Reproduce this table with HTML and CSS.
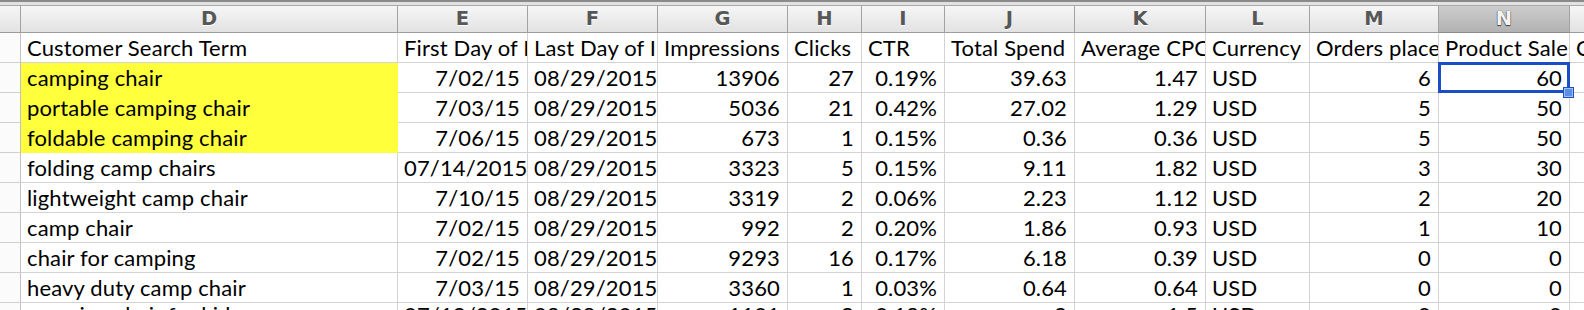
FILE: index.html
```html
<!DOCTYPE html>
<html>
<head>
<meta charset="utf-8">
<link rel="stylesheet" href="styles.css">
</head>
<body>
<div class="topbar"></div>
<div class="sheet">
  <div class="ch corner"></div>
  <div class="ch">D</div>
  <div class="ch">E</div>
  <div class="ch">F</div>
  <div class="ch">G</div>
  <div class="ch">H</div>
  <div class="ch">I</div>
  <div class="ch">J</div>
  <div class="ch">K</div>
  <div class="ch">L</div>
  <div class="ch">M</div>
  <div class="ch sel">N</div>
  <div class="ch">O</div>

  <div class="rh"></div>
  <div class="c">Customer Search Term</div>
  <div class="c">First Day of Impression</div>
  <div class="c">Last Day of Impression</div>
  <div class="c">Impressions</div>
  <div class="c">Clicks</div>
  <div class="c">CTR</div>
  <div class="c">Total Spend</div>
  <div class="c">Average CPC</div>
  <div class="c">Currency</div>
  <div class="c">Orders placed within 1-week of a click</div>
  <div class="c">Product Sales within 1-week of a click</div>
  <div class="c">Conversion Rate</div>

  <div class="rh"></div>
  <div class="c hl">camping chair</div>
  <div class="c r">7/02/15</div>
  <div class="c">08/29/2015</div>
  <div class="c r">13906</div>
  <div class="c r">27</div>
  <div class="c r">0.19%</div>
  <div class="c r">39.63</div>
  <div class="c r">1.47</div>
  <div class="c">USD</div>
  <div class="c r">6</div>
  <div class="c r active">60<span class="selbox"><span class="handle"></span></span></div>
  <div class="c"></div>

  <div class="rh"></div>
  <div class="c hl">portable camping chair</div>
  <div class="c r">7/03/15</div>
  <div class="c">08/29/2015</div>
  <div class="c r">5036</div>
  <div class="c r">21</div>
  <div class="c r">0.42%</div>
  <div class="c r">27.02</div>
  <div class="c r">1.29</div>
  <div class="c">USD</div>
  <div class="c r">5</div>
  <div class="c r">50</div>
  <div class="c"></div>

  <div class="rh"></div>
  <div class="c hl">foldable camping chair</div>
  <div class="c r">7/06/15</div>
  <div class="c">08/29/2015</div>
  <div class="c r">673</div>
  <div class="c r">1</div>
  <div class="c r">0.15%</div>
  <div class="c r">0.36</div>
  <div class="c r">0.36</div>
  <div class="c">USD</div>
  <div class="c r">5</div>
  <div class="c r">50</div>
  <div class="c"></div>

  <div class="rh"></div>
  <div class="c">folding camp chairs</div>
  <div class="c r">07/14/2015</div>
  <div class="c">08/29/2015</div>
  <div class="c r">3323</div>
  <div class="c r">5</div>
  <div class="c r">0.15%</div>
  <div class="c r">9.11</div>
  <div class="c r">1.82</div>
  <div class="c">USD</div>
  <div class="c r">3</div>
  <div class="c r">30</div>
  <div class="c"></div>

  <div class="rh"></div>
  <div class="c">lightweight camp chair</div>
  <div class="c r">7/10/15</div>
  <div class="c">08/29/2015</div>
  <div class="c r">3319</div>
  <div class="c r">2</div>
  <div class="c r">0.06%</div>
  <div class="c r">2.23</div>
  <div class="c r">1.12</div>
  <div class="c">USD</div>
  <div class="c r">2</div>
  <div class="c r">20</div>
  <div class="c"></div>

  <div class="rh"></div>
  <div class="c">camp chair</div>
  <div class="c r">7/02/15</div>
  <div class="c">08/29/2015</div>
  <div class="c r">992</div>
  <div class="c r">2</div>
  <div class="c r">0.20%</div>
  <div class="c r">1.86</div>
  <div class="c r">0.93</div>
  <div class="c">USD</div>
  <div class="c r">1</div>
  <div class="c r">10</div>
  <div class="c"></div>

  <div class="rh"></div>
  <div class="c">chair for camping</div>
  <div class="c r">7/02/15</div>
  <div class="c">08/29/2015</div>
  <div class="c r">9293</div>
  <div class="c r">16</div>
  <div class="c r">0.17%</div>
  <div class="c r">6.18</div>
  <div class="c r">0.39</div>
  <div class="c">USD</div>
  <div class="c r">0</div>
  <div class="c r">0</div>
  <div class="c"></div>

  <div class="rh"></div>
  <div class="c">heavy duty camp chair</div>
  <div class="c r">7/03/15</div>
  <div class="c">08/29/2015</div>
  <div class="c r">3360</div>
  <div class="c r">1</div>
  <div class="c r">0.03%</div>
  <div class="c r">0.64</div>
  <div class="c r">0.64</div>
  <div class="c">USD</div>
  <div class="c r">0</div>
  <div class="c r">0</div>
  <div class="c"></div>

  <div class="rh"></div>
  <div class="c last">camping chair for kids</div>
  <div class="c r last">07/13/2015</div>
  <div class="c last">08/29/2015</div>
  <div class="c r last">1101</div>
  <div class="c r last">2</div>
  <div class="c r last">0.18%</div>
  <div class="c r last">3</div>
  <div class="c r last">1.5</div>
  <div class="c last">USD</div>
  <div class="c r last">0</div>
  <div class="c r last">0</div>
  <div class="c last"></div>
</div>
</body>
</html>
```
FILE: styles.css
```css
html, body {
  margin: 0;
  padding: 0;
  background: #ffffff;
  overflow: hidden;
  width: 1584px;
  height: 310px;
}

.topbar {
  height: 6px;
  box-sizing: border-box;
  border-top: 2px solid #8a8a8a;
  border-bottom: 1px solid #a9a9a9;
  background: #e2e2e2;
}

.sheet {
  display: grid;
  grid-template-columns: 21px 377px 130px 130px 130px 74px 83px 130px 131px 104px 129px 131px 130px;
  grid-template-rows: 27px;
  grid-auto-rows: 30px;
  width: max-content;
}

.ch {
  box-sizing: border-box;
  border-right: 1px solid #a2a2a2;
  border-bottom: 1px solid #9c9c9c;
  background: linear-gradient(#f6f6f6, #e2e2e2);
  font-family: "DejaVu Sans", sans-serif;
  font-weight: bold;
  font-size: 19.5px;
  line-height: 26px;
  text-align: center;
  color: #575757;
  text-shadow: 0 1px 0 #ffffff;
}

.ch.sel {
  background: linear-gradient(#cdcdcd, #b2b2b2);
  color: #f2f2f2;
  text-shadow: 0 0 1px #3c3c3c, 0 1px 1px #3c3c3c;
  border-bottom-color: #8a8a8a;
}

.rh {
  box-sizing: border-box;
  background: #fbfbfb;
  border-right: 1px solid #c2c2c2;
  border-bottom: 1px solid #cfcfcf;
}

.c {
  box-sizing: border-box;
  border-right: 1px solid #d3d3d3;
  border-bottom: 1px solid #d3d3d3;
  font-family: "Lato", "Carlito", sans-serif;
  font-size: 22px;
  letter-spacing: 0.15px;
  line-height: 29px;
  color: #000000;
  padding: 0 5px 0 6px;
  white-space: nowrap;
  overflow: hidden;
}

.c.r {
  text-align: right;
  padding-right: 7px;
}

.c.last {
  line-height: 24px;
}

.c.hl {
  background: #ffff3c;
  border-right-color: #ffff3c;
  border-bottom-color: #ffff3c;
}

.c.active {
  position: relative;
  overflow: visible;
}

.selbox {
  position: absolute;
  top: -1px;
  left: -1px;
  right: -1px;
  bottom: -1px;
  border: 3px solid #1b4ec4;
  pointer-events: none;
}

.handle {
  position: absolute;
  right: -7px;
  bottom: -8px;
  width: 9px;
  height: 9px;
  background: #5b8fe3;
  border: 1px solid #1b4ec4;
  box-shadow: inset 0 0 0 1px #9fc0f0;
}
```
